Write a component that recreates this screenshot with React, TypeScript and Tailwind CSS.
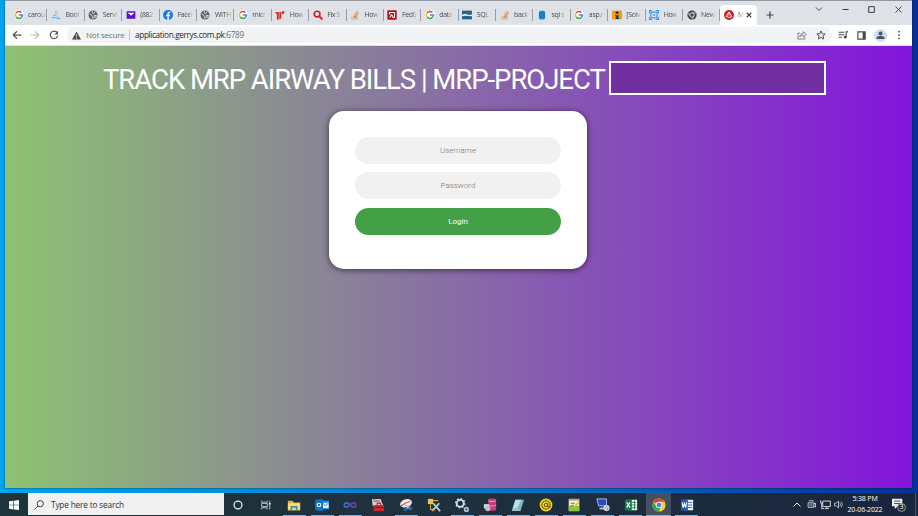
import React from "react";
import type { ReactNode } from "react";

const UI = "font-['Open_Sans','Noto_Sans',sans-serif]";

function Svg({ size = 12, children, vb = 16 }: { size?: number; vb?: number; children: ReactNode }) {
  return (
    <svg width={size} height={size} viewBox={`0 0 ${vb} ${vb}`} fill="none" className="block shrink-0">
      {children}
    </svg>
  );
}

const Google = () => (
  <Svg size={10}>
    <circle cx="8" cy="8" r="8" fill="#fff" />
    <path d="M3.3 4.6A5.7 5.7 0 0 1 12 4" stroke="#ea4335" strokeWidth="2.5" />
    <path d="M3.4 11.3a5.7 5.7 0 0 1 0-6.7" stroke="#fbbc05" strokeWidth="2.5" />
    <path d="M12 12a5.7 5.7 0 0 1-8.6-.8" stroke="#34a853" strokeWidth="2.5" />
    <path d="M8 8h5.7a5.7 5.7 0 0 1-1.8 4" stroke="#4285f4" strokeWidth="2.4" />
  </Svg>
);
const Stack = () => (
  <Svg size={10}>
    <path d="M3 10v4.5h9V10" stroke="#bcbbbb" strokeWidth="1.5" />
    <path d="M5 12.5h5.5M5 10l5.5 1M6 7l5 2.6M8 4l4 4.2M11 1.5l2.4 5" stroke="#f0883a" strokeWidth="1.7" />
  </Svg>
);
const Globe = () => (
  <Svg size={10}>
    <circle cx="8" cy="8" r="7.2" fill="#5f6368" />
    <path d="M2.5 6.2 6 8.2l1 2.4 1.3.6-.8 3M7 2.2l-.5 2 2.2 1.4 1.6-1 .4-2M10 8.6l3.6.4-1.7 3.2-1.6-.8z" stroke="#e8eaed" strokeWidth="1.4" />
  </Svg>
);
const ChromeGray = () => (
  <Svg size={10}>
    <circle cx="8" cy="8" r="7.4" fill="#414549" />
    <circle cx="8" cy="8" r="3.5" stroke="#dfe1e5" strokeWidth="1.4" />
    <path d="M8 4.5h6.5M5 9.8 2 4.6M11 9.8 8 15" stroke="#dfe1e5" strokeWidth="1.2" />
  </Svg>
);
const CloudPerson = () => (
  <Svg size={10}>
    <circle cx="8" cy="3" r="2.2" fill="#f3b184" />
    <path d="M5 13l1-7h4l2 7z" fill="#a9d7f3" />
    <path d="M1 12h6M9 13.5h6M4 8.5h3" stroke="#5bb5ea" strokeWidth="2" />
  </Svg>
);
const Yahoo = () => (
  <Svg size={10}>
    <rect x="1" y="2" width="14" height="12" rx="1" fill="#5b10c9" />
    <path d="M2.5 4.2h11L8 9z" fill="#fff" />
  </Svg>
);
const Facebook = () => (
  <Svg size={10}>
    <circle cx="8" cy="8" r="8" fill="#1877f2" />
    <path d="M7 16V10H5V7.7h2V6c0-2.2 1.2-3.3 3.1-3.3l1.5.1v2h-1c-1 0-1.3.6-1.3 1.3v1.6h2.2L11.1 10H9.3v6z" fill="#fff" />
  </Svg>
);
const Books = () => (
  <Svg size={10}>
    <path d="M1 3h5v12H3V6H1zM7 3h3v10l-3 2zM11 2h4v3l-4 2z" fill="#d5232c" />
  </Svg>
);
const RedSearch = () => (
  <Svg size={10}>
    <circle cx="6.5" cy="6.5" r="4.6" stroke="#cb1e26" strokeWidth="2.6" />
    <path d="m10 10 5 5" stroke="#cb1e26" strokeWidth="3" />
  </Svg>
);
const RedBox = () => (
  <Svg size={10}>
    <rect x="0.5" y="0.5" width="15" height="15" rx="1.5" fill="#b80f1e" />
    <path d="M4 7V4h8v8H9" stroke="#fff" strokeWidth="1.6" />
    <path d="m4 12 4-4M5 8h3.500v3.500" stroke="#fff" strokeWidth="1.6" />
  </Svg>
);
const SqlShack = () => (
  <Svg size={10}>
    <path d="M0 1h16v14H0z" fill="#28648c" />
    <path d="M0 7.5 6 6l4 2 6-1v3l-6-.5L6 9l-6 1z" fill="#e6f1f6" />
  </Svg>
);
const Database = () => (
  <Svg size={10}>
    <rect x="3" y="1" width="10" height="14" rx="3" fill="#168ac7" />
    <path d="M3.5 4.5c2 1.2 7 1.2 9 0M3.5 9c2 1.2 7 1.2 9 0" stroke="#0b6fab" />
  </Svg>
);
const Solved = () => (
  <Svg size={10}>
    <path d="M0 1h16v14H0z" fill="#f79b16" />
    <circle cx="8" cy="4.5" r="2.5" fill="#242b23" />
    <path d="M4 8.5h7l-1 3 2 3H5l2-3z" fill="#263d2d" />
    <path d="m7 6 3 2" stroke="#f5ca4b" strokeWidth="1.5" />
  </Svg>
);
const BlueFrame = () => (
  <Svg size={10}>
    <path d="M1 5V1h4M11 1h4v4M15 11v4h-4M5 15H1v-4" stroke="#2492ee" strokeWidth="2" />
    <rect x="3" y="3.5" width="10" height="9" rx="3" stroke="#3a9df0" strokeWidth="2" />
    <path d="M6 8h4" stroke="#3a9df0" strokeWidth="2" />
  </Svg>
);
const RedRound = () => (
  <Svg size={10}>
    <circle cx="8" cy="8" r="8" fill="#c8202d" />
    <path d="m8 3.2 4.5 7.3L8 12l-4.5-1.5z" stroke="#fff" strokeWidth="1.5" />
    <path d="M8 4v5" stroke="#fff" strokeWidth="1.3" />
  </Svg>
);

const tabs: [() => ReactNode, string][] = [
  [Google, "carou"], [CloudPerson, "Boot"], [Globe, "Servi"], [Yahoo, "(882"], [Facebook, "Facel"],
  [Globe, "WITH"], [Google, "micr"], [Books, "How"], [RedSearch, "Fix S"], [Stack, "How"],
  [RedBox, "FedE"], [Google, "data"], [SqlShack, "SQL"], [Stack, "back"], [Database, "sql s"],
  [Google, "asp.r"], [Solved, "[Solv"], [BlueFrame, "How"], [ChromeGray, "New"],
];

function TabStrip() {
  return (
    <div className="flex h-[25px] shrink-0 border-t border-[#9298a2] bg-[#dee1e6] pl-[5px]">
      {tabs.map(([Icon, label], i) => (
        <div key={i} className="flex h-[28px] w-[37.4px] shrink-0 items-center pl-[3.5px]">
          <Icon />
          <span className="ml-[4.5px] shrink-0 whitespace-nowrap bg-linear-to-r from-[#3f4348] from-60% to-[#b4b7bc] bg-clip-text text-[7px] leading-[12px] tracking-[-0.35px] text-transparent">
            {label}
          </span>
          <i className="ml-auto h-[12px] w-px bg-[#9a9da3]" />
        </div>
      ))}
      <div className="mt-[4px] flex h-[20px] w-[37px] shrink-0 items-center rounded-t-[4px] bg-white pl-[3.5px]">
        <RedRound />
        <span className="ml-[4px] w-[6px] bg-linear-to-r from-[#555] from-20% to-[#eee] bg-clip-text text-[6.5px] leading-[12px] text-transparent">M</span>
        <span className="ml-[2.5px]">
          <Svg size={6}><path d="m2 2 12 12M14 2 2 14" stroke="#3c4043" strokeWidth="3" /></Svg>
        </span>
      </div>
      <div className="ml-[9px] flex h-[28px] items-center">
        <Svg size={8}><path d="M8 1v14M1 8h14" stroke="#3c4043" strokeWidth="2.4" /></Svg>
      </div>
      <div className="ml-auto flex h-[16px] items-center">
        <div className="flex w-[26px] justify-center"><Svg size={8}><path d="m2 5 6 6 6-6" stroke="#444" strokeWidth="1.8" /></Svg></div>
        <div className="flex w-[26px] justify-center"><Svg size={7}><path d="M1 8h14" stroke="#333" strokeWidth="2.2" /></Svg></div>
        <div className="flex w-[27px] justify-center"><Svg size={7}><path d="M1.5 1.5h13v13h-13z" stroke="#333" strokeWidth="2.2" /></Svg></div>
        <div className="mr-px flex w-[26px] justify-center"><Svg size={7}><path d="m1 1 14 14M15 1 1 15" stroke="#333" strokeWidth="2" /></Svg></div>
      </div>
    </div>
  );
}

function Toolbar() {
  return (
    <div className="flex h-[21px] shrink-0 items-center border-b border-[#e0e0e4] bg-white pl-[7px]">
      <Svg size={10}><path d="M15 8H2M8 2 2 8l6 6" stroke="#55595e" strokeWidth="2" /></Svg>
      <div className="ml-[8px]"><Svg size={10}><path d="M1 8h13M8 2l6 6-6 6" stroke="#babcbe" strokeWidth="1.8" /></Svg></div>
      <div className="ml-[9px]">
        <Svg size={10}><path d="M13 4.3A6 6 0 1 0 14 9" stroke="#55595e" strokeWidth="2" /><path d="M14.5 1v6h-6z" fill="#55595e" /></Svg>
      </div>
      <div className="ml-[8px] flex h-[16px] w-[765px] items-center rounded-full bg-[#f1f3f4] pl-[5px]">
        <Svg size={9}><path d="M8 1 16 15H0z" fill="#4a4d51" /><path d="M8 6v4M8 11.5v2" stroke="#fff" strokeWidth="1.5" /></Svg>
        <span className="ml-[5px] w-[39px] whitespace-nowrap text-[8px] leading-[14px] tracking-[-0.2px] text-[#6c7074]">Not secure</span>
        <i className="ml-[4px] h-[10px] w-px bg-[#bfc2c6]" />
        <span className="ml-[5px] whitespace-nowrap text-[8.2px] leading-[14px] tracking-[-0.34px] text-[#25282c]">
          application.gerrys.com.pk<span className="text-[#6c7074]">:6789</span>
        </span>
        <div className="ml-auto mr-[6px] flex gap-[9px]">
          <Svg size={10}><path d="M5 5H1.5v9.5h11V11M4.5 11C5 7 7.500 5.500 10 5.500V2.500l5 4.500-5 4V8C8 8 6 8.600 4.500 11z" stroke="#5f6368" strokeWidth="1.2" /></Svg>
          <Svg size={10}><path d="m8 1.5 2 4.5 4.8.4-3.7 3.2 1.200 4.800L8 11.800l-4.300 2.600 1.200-4.800L1.200 6.400 6 6z" stroke="#44484c" strokeWidth="1.5" /></Svg>
        </div>
      </div>
      <div className="ml-[6px]"><Svg size={10}><path d="M1 3.5h9M1 7.5h9M1 11.5h5M13 11V3h3" stroke="#44484c" strokeWidth="1.7" /><circle cx="11.5" cy="11.5" r="2.2" fill="#44484c" /></Svg></div>
      <div className="ml-[9px]"><Svg size={9}><path d="M1.5 1.5h13v13h-13z" stroke="#44484c" strokeWidth="2" /><path d="M10 2h4.5v12H10z" fill="#44484c" /></Svg></div>
      <div className="ml-[8px] flex size-[13px] items-center justify-center rounded-full bg-[#cfdcec]">
        <Svg size={9}><circle cx="8" cy="4.5" r="3.5" fill="#46566b" /><path d="M1 14v-2c0-4 14-4 14 0v2z" fill="#46566b" /></Svg>
      </div>
      <div className="ml-[7px]"><Svg size={10}><circle cx="8" cy="2.5" r="1.4" fill="#44484c" /><circle cx="8" cy="8" r="1.4" fill="#44484c" /><circle cx="8" cy="13.5" r="1.4" fill="#44484c" /></Svg></div>
    </div>
  );
}

function Page() {
  return (
    <main className="flex-1 bg-[linear-gradient(to_right,#8ec272,#8315db)] font-[Roboto,sans-serif]">
      <div className="flex h-[65px] items-start pl-[98px] pt-[15px]">
        <h1 className="w-[506px] whitespace-nowrap text-[27.5px] font-normal leading-[37px] tracking-[-1.04px] text-white">
          TRACK MRP AIRWAY BILLS | MRP-PROJECT
        </h1>
        <div className="h-[34px] w-[217px] border-2 border-white bg-[#7030a0]" />
      </div>
      <form className="ml-[324px] flex h-[158px] w-[258px] flex-col rounded-[15px] bg-white px-[26px] pt-[26px] text-[8px] font-light shadow-[0_1px_6px_rgba(0,0,0,0.6)]">
        <input className="h-[27px] rounded-full bg-[#f1f1f1] text-center outline-none placeholder:text-[#757575]" placeholder="Username" />
        <input className="mt-[8px] h-[27px] rounded-full bg-[#f1f1f1] text-center outline-none placeholder:text-[#757575]" placeholder="Password" />
        <button type="button" className="mt-[9px] h-[27px] rounded-full bg-[#43a047] text-center font-normal text-white">Login</button>
      </form>
    </main>
  );
}

const apps: ReactNode[] = [
  <Svg size={14}><path d="M1 3h5l2 2h7v9H1z" fill="#e8b02c" /><path d="M1 6h14v8H1z" fill="#ffd969" /><path d="M4 9h8v5h-2v-3H6v3H4z" fill="#2e8fdd" /></Svg>,
  <Svg size={14}><path d="M8 3h8v10H8z" fill="#2788d8" /><path d="M9 5.500h6.500v6H9z" fill="#e8f4ff" /><path d="m9 6 3 3 3-3" stroke="#0a68bd" /><path d="M0 2 9 .8v14.400L0 14z" fill="#0872c8" /><circle cx="4.5" cy="8" r="2" stroke="#fff" strokeWidth="1.4" /></Svg>,
  <Svg size={14}><path d="M8 8C5 4.500 1.500 5 1.500 8S5 11.500 8 8" stroke="#396fb7" strokeWidth="2" /><path d="M8 8c3-3.500 6.500-3 6.500 0S11 11.500 8 8" stroke="#6c3bad" strokeWidth="2.2" /></Svg>,
  <Svg size={14}><path d="M1 1h10l3 8H2z" fill="#dbd3d3" /><path d="m2 2 8 1M3 4l8 1" stroke="#c24a4a" /><path d="M3 8h12v7H3z" fill="#cf2630" /><path d="M7 8V6h4v2M3 11h12" stroke="#7e151c" /></Svg>,
  <Svg size={14}><ellipse cx="8" cy="6" rx="7" ry="4.5" fill="#f1e9e7" transform="rotate(-20 8 6)" /><path d="M2 9c3-1 6-5 11-5" stroke="#d84b4b" strokeWidth="1.2" /><path d="m7 8 6 5M13 8l-5 5" stroke="#aebccd" strokeWidth="1.2" /><circle cx="7.5" cy="13" r="1.6" stroke="#2a7ed0" /><circle cx="13.5" cy="12" r="1.6" stroke="#2a7ed0" /></Svg>,
  <Svg size={14}><path d="M4 7v6h4M6 3h7" stroke="#c8a32f" strokeWidth="1.2" /><path d="M1 1h6v6H1z" fill="#e9c74c" /><path d="m7 6 8 9M14 6l-7 8" stroke="#c8cbd0" strokeWidth="2" /><path d="m8 12-2 3" stroke="#d8af2c" strokeWidth="2" /></Svg>,
  <Svg size={14}><circle cx="6" cy="6" r="4" stroke="#cfe4f2" strokeWidth="2" /><circle cx="6" cy="6" r="5.2" stroke="#cfe4f2" strokeWidth="1.5" strokeDasharray="2 2" /><circle cx="13" cy="13" r="2" stroke="#a7c7df" strokeWidth="2" /></Svg>,
  <Svg size={14}><path d="M6 2c0-2 9-2 9 0v11c0 2-9 2-9 0z" fill="#c53c7b" /><path d="M6 3c2 1.500 7 1.500 9 0M6 8c2 1.500 7 1.500 9 0" stroke="#f3a5c6" /><path d="M1 7h6v5H1z" fill="#d4d7dc" /><circle cx="5.5" cy="12" r="3" fill="#c3bcc8" /></Svg>,
  <Svg size={14}><path d="M5 2h10l-4 12H1z" fill="#77b7ca" /><path d="M5 2h7L7 12H2z" fill="#b9e0ea" /><path d="M1 14h10" stroke="#e5f4f7" /></Svg>,
  <Svg size={14}><circle cx="8" cy="8" r="7.3" fill="#f4d727" /><circle cx="8" cy="8" r="4.8" stroke="#54490d" strokeWidth="1.1" /><circle cx="8" cy="8" r="2" stroke="#54490d" strokeWidth="1.1" /><path d="M10 6v4h3" stroke="#54490d" /></Svg>,
  <Svg size={14}><path d="M2 1h12v14H2z" fill="#f3f2df" /><path d="M2 9h12v6H2z" fill="#87c83f" /><path d="M2 2h12" stroke="#c6a154" strokeWidth="2" /><path d="M4 6h5M4 9l4-1" stroke="#477828" /><path d="m8 11 6-7" stroke="#efb62e" strokeWidth="2" /></Svg>,
  <Svg size={14}><path d="M1 1h11v8H3z" fill="#2549c9" /><path d="M1 1h11v8H3z" stroke="#b9c9ed" /><path d="M4 12h8" stroke="#b9c9ed" strokeWidth="2" /><circle cx="12" cy="11.5" r="3.5" fill="#dce2ea" /><path d="m10 12 3-3M12 14l2-3" stroke="#667" /></Svg>,
  <Svg size={14}><path d="M8 2h7v12H8z" fill="#e9f4ed" /><path d="M9 5h5M9 8h5M9 11h5M12 3v10" stroke="#21834e" /><path d="M1 2 9 1v14l-8-1z" fill="#18764a" /><path d="m3 5 4 6M7 5l-4 6" stroke="#fff" strokeWidth="1.3" /></Svg>,
  <Svg size={14}><circle cx="8" cy="8" r="7.5" fill="#ffcd40" /><path d="M8 8 1.500 4.200A7.500 7.500 0 0 1 14.500 4.300H8z" fill="#e94235" /><path d="M1.500 4.200A7.500 7.500 0 0 0 7.500 15.500L10.500 10 5 10z" fill="#35a552" /><circle cx="8" cy="8" r="3.6" fill="#fff" /><circle cx="8" cy="8" r="2.8" fill="#4285f4" /></Svg>,
  <Svg size={14}><path d="M8 2h7v12H8z" fill="#eef4fd" /><path d="M9 5h5M9 8h5M9 11h5" stroke="#2b5eaf" /><path d="M1 2 9 1v14l-8-1z" fill="#275ba9" /><path d="m2.500 5 1 6L5 6l1.500 5 1-6" stroke="#fff" strokeWidth="1.2" /></Svg>,
];

function Taskbar() {
  return (
    <footer className="flex h-[23px] shrink-0 bg-linear-to-r from-[#1e353c] via-[#1e303d] to-[#1a253e]">
      <div className="flex w-[28px] items-center justify-center">
        <Svg size={10}><path d="M0 2 7 1v6.500H0zM8 1l8-1v7.500H8zM0 8.500h7V15l-7-1zM8 8.500h8V16l-8-1z" fill="#fff" /></Svg>
      </div>
      <div className="flex h-[22px] w-[196px] items-center bg-[#f1f1f1] pl-[6px] pt-px">
        <Svg size={10}><circle cx="10" cy="6" r="5" stroke="#333" strokeWidth="1.5" /><path d="m6.500 9.500-6 6" stroke="#333" strokeWidth="1.5" /></Svg>
        <span className="ml-[7px] whitespace-nowrap text-[8.3px] leading-[14px] tracking-[-0.18px] text-[#303030]">Type here to search</span>
      </div>
      <div className="flex w-[28px] items-center justify-center"><Svg size={10}><circle cx="8" cy="8" r="6.3" stroke="#eee" strokeWidth="2" /></Svg></div>
      <div className="flex w-[28px] items-center justify-center">
        <Svg size={10}><path d="M1 1v2.500h9V1M1 15v-2.500h9V15M1 5.500h9v5H1zM14 1v3M14 8v7" stroke="#c8ced1" strokeWidth="1.4" /><path d="M12.500 4.500h3v3h-3z" fill="#eee" /></Svg>
      </div>
      {apps.map((icon, i) => (
        <div key={i} className="flex w-[28.06px] shrink-0 justify-center">
          <div className={i === 13 ? "flex h-[23px] w-[25px] flex-col items-center bg-[#43515f]" : "flex h-[23px] w-[23px] flex-col items-center"}>
            <div className="flex h-[22px] items-center pt-px">{icon}</div>
            {i !== 3 && i !== 5 && <i className="h-px w-full bg-[#76b5e6]" />}
          </div>
        </div>
      ))}
      <div className="ml-auto flex items-center text-white">
        <Svg size={8}><path d="m1 11 7-7 7 7" stroke="#eee" strokeWidth="2" /></Svg>
        <div className="ml-[6px]"><Svg size={9}><path d="M3 1.500h9M2 5h10v8H2zM12 7l3-1.500v7L12 11" stroke="#ddd" strokeWidth="1.5" /><circle cx="7" cy="9" r="2" stroke="#ddd" /></Svg></div>
        <div className="ml-[4px]"><Svg size={11}><path d="M4 3h11v8H4zM7 14h6M10 11v3M1 2v4h3M2.500 6v8H6" stroke="#ddd" strokeWidth="1.4" /></Svg></div>
        <div className="ml-[3px]"><Svg size={9}><path d="M1 5.500h3l4-3.500v12L4 10.500H1zM10 5c2 2 2 4 0 6M12.500 3c3 3 3 7 0 10" stroke="#ddd" strokeWidth="1.4" /></Svg></div>
        <div className="ml-[3px] w-[38px] whitespace-nowrap text-center text-[7px] leading-[10.5px] tracking-[-0.16px]">
          <div>5:38 PM</div>
          <div>20-06-2022</div>
        </div>
        <div className="relative ml-[8px] mr-[9px] h-[13px] w-[14px]">
          <Svg size={11}><path d="M0 1h15v11H8l-4 4v-4H0z" fill="#eee" /><path d="M3 4.500h9M3 8h9" stroke="#364052" strokeWidth="1.3" /></Svg>
          <span className="absolute left-[5px] top-[5px] flex size-[9px] items-center justify-center rounded-full border border-[#899] bg-[#28313f] text-[6.5px] leading-none">3</span>
        </div>
        <i className="h-[23px] w-px bg-[#4a5465]" />
        <i className="w-[2px]" />
      </div>
    </footer>
  );
}

export default function App() {
  return (
    <div className={`flex h-[516px] w-[918px] flex-col overflow-hidden bg-[linear-gradient(to_right,#02a4ee,#0877c4_55%,#03309a)] ${UI}`}>
      <div className="mb-[5px] ml-[5px] flex h-[488px] w-[907px] flex-col shadow-[0_0_2px_rgba(0,0,0,0.6)]">
        <TabStrip />
        <Toolbar />
        <Page />
      </div>
      <Taskbar />
    </div>
  );
}
